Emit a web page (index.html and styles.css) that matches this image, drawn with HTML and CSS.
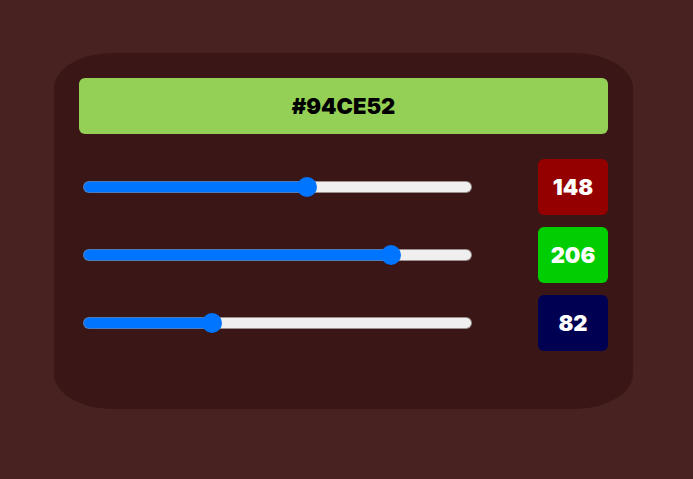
FILE: index.html
```html
<!DOCTYPE html>
<html lang="en">
<head>
  <meta charset="utf-8">
  <meta name="viewport" content="width=device-width, initial-scale=1">
  <title>Color Mixer</title>
  <link rel="stylesheet" href="styles.css">
</head>
<body>
  <main class="card">
    <output class="swatch" for="red green blue">#94CE52</output>
    <div class="channels">
      <div class="channel">
        <input class="slider" id="red" type="range" min="0" max="255" value="148" aria-label="Red" style="--value: 148">
        <output class="value value-red" for="red">148</output>
      </div>
      <div class="channel">
        <input class="slider" id="green" type="range" min="0" max="255" value="206" aria-label="Green" style="--value: 206">
        <output class="value value-green" for="green">206</output>
      </div>
      <div class="channel">
        <input class="slider" id="blue" type="range" min="0" max="255" value="82" aria-label="Blue" style="--value: 82">
        <output class="value value-blue" for="blue">82</output>
      </div>
    </div>
  </main>
</body>
</html>
```
FILE: styles.css
```css
* {
  box-sizing: border-box;
}

body {
  margin: 0;
  padding: 53px 60px 53px 54px;
  background: #482121;
  font-family: "Arial Black", Inter, sans-serif;
  font-size: 22px;
  font-weight: 900;
  line-height: 56px;
}

.card {
  display: flex;
  flex-direction: column;
  gap: 25px;
  padding: 25px 25px 58px;
  border-radius: 10%;
  background: #3a1616;
}

.swatch {
  border-radius: 6px;
  background: #94d055;
  color: #000;
  text-align: center;
}

.channels {
  display: flex;
  flex-direction: column;
  gap: 12px;
}

.channel {
  display: flex;
  align-items: center;
  justify-content: space-between;
}

.value {
  width: 70px;
  border-radius: 6px;
  color: #fff;
  text-align: center;
}

.value-red {
  background: #940000;
}

.value-green {
  background: #00ce00;
}

.value-blue {
  background: #000052;
}

.slider {
  --fill: calc(9px + (100% - 18px) * var(--value) / 255);
  appearance: none;
  width: calc(75% - 8px);
  height: 20px;
  margin: 0 4px;
  background: transparent;
}

.slider::-webkit-slider-runnable-track {
  height: 12px;
  border: 1px solid transparent;
  border-radius: 6px;
  background:
    linear-gradient(to right, #0075ff var(--fill), #efefef var(--fill)) padding-box,
    linear-gradient(to right, #4f7dbb var(--fill), #9b9090 var(--fill)) border-box;
}

.slider::-webkit-slider-thumb {
  appearance: none;
  width: 18px;
  height: 18px;
  margin-top: -4px;
  border-radius: 50%;
  background: #0075ff;
  box-shadow: 0 0 0 1px #0075ff;
}
```
